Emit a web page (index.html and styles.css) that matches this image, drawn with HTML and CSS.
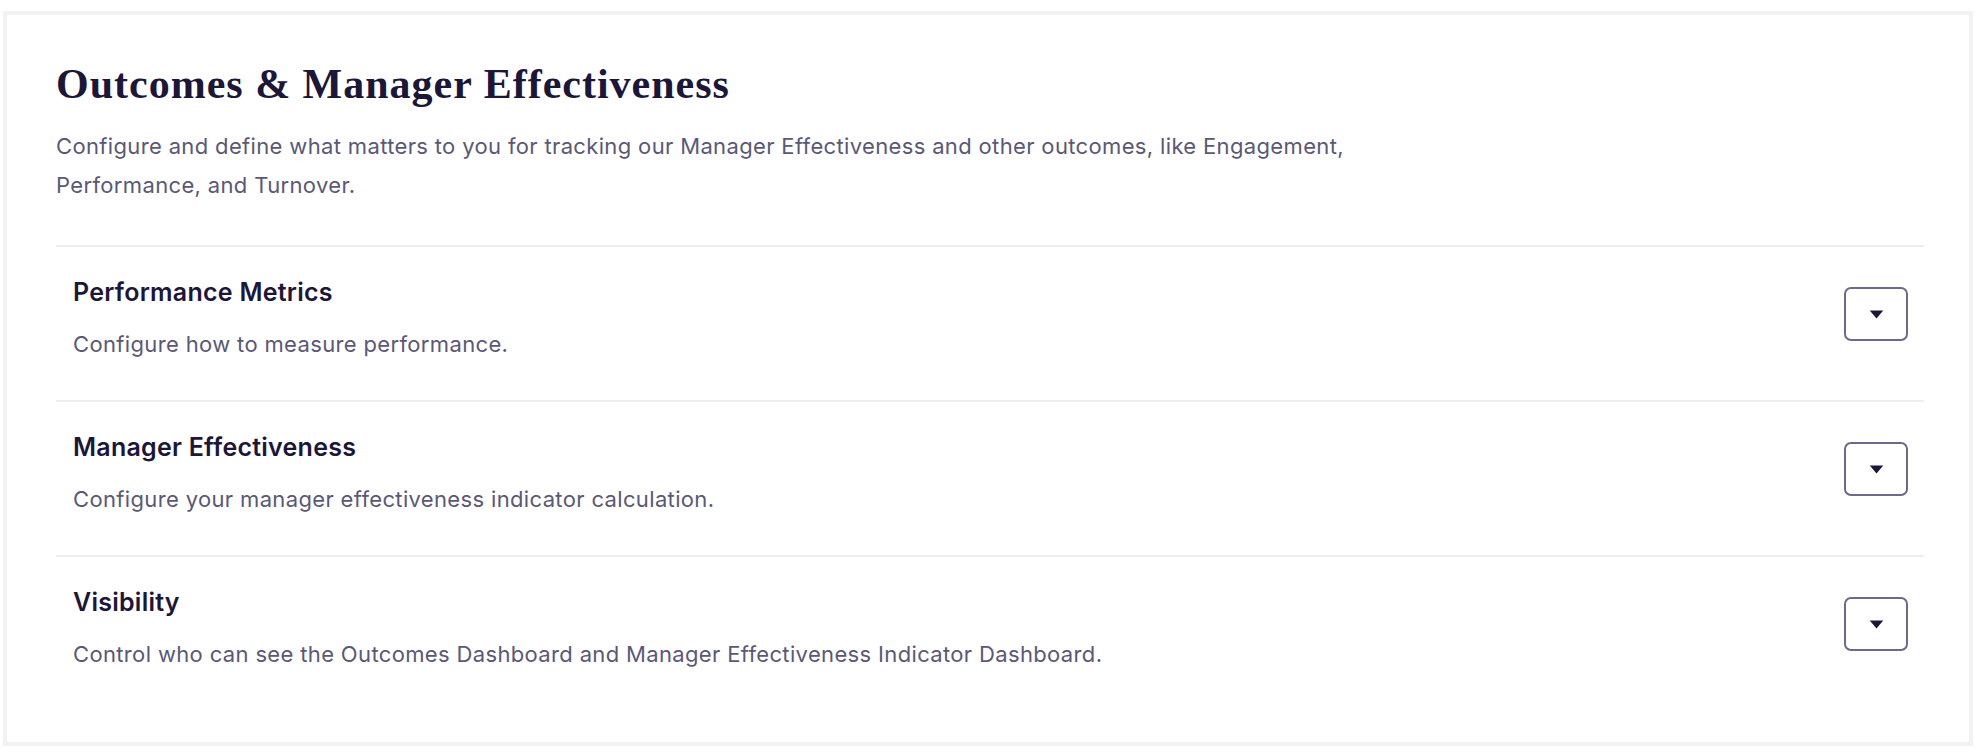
FILE: index.html
```html
<!DOCTYPE html>
<html lang="en">
<head>
<meta charset="utf-8">
<title>Outcomes &amp; Manager Effectiveness</title>
<link rel="stylesheet" href="styles.css">
</head>
<body>
<main class="card">
  <header class="page-head">
    <h1 class="page-title">Outcomes &amp; Manager Effectiveness</h1>
    <p class="page-desc">Configure and define what matters to you for tracking our Manager Effectiveness and other outcomes, like Engagement, Performance, and Turnover.</p>
  </header>
  <section class="row">
    <div class="row-text">
      <h2 class="row-title">Performance Metrics</h2>
      <p class="row-desc">Configure how to measure performance.</p>
    </div>
    <button class="toggle" type="button" aria-label="Expand Performance Metrics">
      <svg viewBox="0 0 16 10" width="15" height="9" aria-hidden="true"><path d="M0.5 0.5 H15.5 L8 9.5 Z" fill="#1c1638"/></svg>
    </button>
  </section>
  <section class="row">
    <div class="row-text">
      <h2 class="row-title">Manager Effectiveness</h2>
      <p class="row-desc">Configure your manager effectiveness indicator calculation.</p>
    </div>
    <button class="toggle" type="button" aria-label="Expand Manager Effectiveness">
      <svg viewBox="0 0 16 10" width="15" height="9" aria-hidden="true"><path d="M0.5 0.5 H15.5 L8 9.5 Z" fill="#1c1638"/></svg>
    </button>
  </section>
  <section class="row">
    <div class="row-text">
      <h2 class="row-title">Visibility</h2>
      <p class="row-desc">Control who can see the Outcomes Dashboard and Manager Effectiveness Indicator Dashboard.</p>
    </div>
    <button class="toggle" type="button" aria-label="Expand Visibility">
      <svg viewBox="0 0 16 10" width="15" height="9" aria-hidden="true"><path d="M0.5 0.5 H15.5 L8 9.5 Z" fill="#1c1638"/></svg>
    </button>
  </section>
</main>
</body>
</html>
```

FILE: styles.css
```css
html, body {
  margin: 0;
  padding: 0;
  background: #ffffff;
}

body {
  font-family: "Inter", "Liberation Sans", sans-serif;
  color: #1c1638;
}

.card {
  box-sizing: border-box;
  width: 1970px;
  height: 735px;
  margin: 11px 0 0 3px;
  border: 4px solid #f2f2f2;
  padding: 45px 45px 0 49px;
  background: #ffffff;
}

.page-head {
  padding-bottom: 40px;
}

.page-title {
  margin: 0;
  font-family: "Liberation Serif", "DejaVu Serif", serif;
  font-weight: 700;
  font-size: 42px;
  line-height: 48px;
  letter-spacing: 1px;
  color: #1c1638;
}

.page-desc {
  margin: 19px 0 0 0;
  max-width: 1320px;
  font-size: 22px;
  line-height: 39px;
  letter-spacing: 0.35px;
  color: #5b5876;
}

.row {
  display: flex;
  align-items: flex-start;
  justify-content: space-between;
  border-top: 2px solid #ededed;
  padding: 29px 16px 0 17px;
  height: 155px;
  box-sizing: border-box;
}

.row-text {
  display: flex;
  flex-direction: column;
}

.row-title {
  margin: 0;
  font-size: 25px;
  line-height: 32px;
  letter-spacing: 0.25px;
  font-weight: 600;
  color: #1c1638;
}

.row-desc {
  margin: 20px 0 0 0;
  font-size: 22px;
  line-height: 32px;
  letter-spacing: 0.35px;
  color: #5b5876;
}

.toggle {
  margin-top: 11px;
  width: 64px;
  height: 54px;
  box-sizing: border-box;
  border: 2px solid #6c6a8c;
  border-radius: 7px;
  background: #ffffff;
  display: flex;
  align-items: center;
  justify-content: center;
  padding: 0;
  cursor: pointer;
}
```
